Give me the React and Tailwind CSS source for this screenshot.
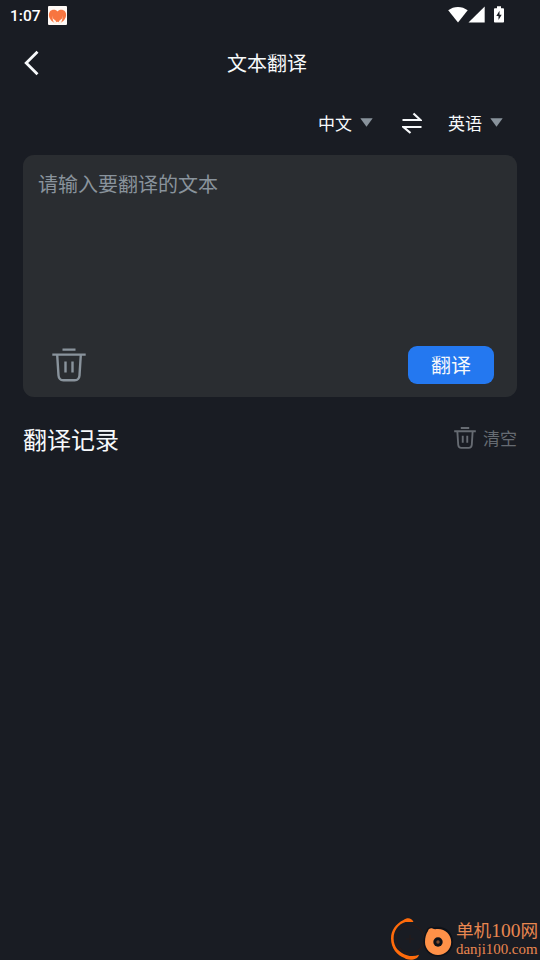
import { useState } from "react";

const TrashIcon = ({ className, strokeWidth }) => (
  <svg viewBox="0 0 34 34" className={className} fill="none" stroke="currentColor" strokeWidth={strokeWidth}>
    <path d="M10.500 1.600h13M0.300 6.600h33.400" />
    <path d="M5.200 7l1.300 20.500c.3 3.500 1.500 4.700 4.800 4.700h11.400c3.300 0 4.500-1.200 4.800-4.700L28.800 7" />
    <path d="M13.500 13.500v11M20.500 13.500v11" />
  </svg>
);

const StatusBar = () => (
  <div className="flex h-8 items-center justify-between pl-[10px] pr-[36px] text-white">
    <div className="flex items-center gap-[7px]">
      <span className="w-[31px] whitespace-nowrap font-[Roboto] text-[15.5px] font-medium leading-8">1:07</span>
      <svg viewBox="0 0 19 19" className="-mt-[1px] h-[19px] w-[19px]">
        <rect width="19" height="19" rx="1" fill="#fffaf7" />
        <path d="M9.500 5.500C8 3.300 3.800 3.100 1.700 5.700c-1.500 2.600-.9 5.500.8 7.800 1.200 1.800 2.500 2.800 4 3.200l3-1 3 1c1.500-.4 2.800-1.400 4-3.200 1.700-2.300 2.300-5.200.8-7.800-2.100-2.600-6.300-2.400-7.800-.2z" fill="#f77540" />
        <path d="M4 9.500l1 3 3 2.500.8 3H6.500L5 14.500zM15 9.500l-1 3-3 2.500-.8 3h2.300l1.500-3.500z" fill="#fff1e6" />
      </svg>
    </div>
    <div className="flex items-center">
      <svg viewBox="0 0 20 17" className="-mt-[3px] h-[17px] w-5" fill="#fff">
        <path d="M.2 4.300C5.800-.2 14-.2 19.700 4.300L10 16.500z" />
      </svg>
      <svg viewBox="0 0 17 17" className="-mt-[3px] h-[17px] w-[17px]" fill="#fff">
        <path d="M16.700 .5v16H.5z" />
      </svg>
      <svg viewBox="0 0 10 17" className="-mt-[3px] ml-[9px] h-[17px] w-[10px]">
        <path d="M3 .3h4v1.900h2.200q.8 0 .8.8v12.700q0 .8-.8.8H.8q-.8 0-.8-.8V3q0-.8.8-.8H3z" fill="#fff" />
        <path d="M5.500 4.700L2.300 10h2.200v4l3.200-5.300H5.500z" fill="#191c23" />
      </svg>
    </div>
  </div>
);

const Language = ({ name }) => (
  <button className="flex items-center gap-[8px] text-[17px] leading-6">
    <span>{name}</span>
    <svg viewBox="0 0 13 9" className="mb-[1px] h-[9px] w-[13px]" fill="#89939c">
      <path d="M.3 .3h12.400L6.500 8.800z" />
    </svg>
  </button>
);

const Watermark = () => (
  <div className="flex h-[43px] w-[150px] self-end">
    <svg viewBox="0 0 64 43" className="h-[43px] w-16 shrink-0">
      <circle cx="20" cy="22" r="14" fill="none" stroke="#241b1c" strokeWidth="1.500" />
      <path d="M16 22h8M20 18v8" stroke="#241b1c" strokeWidth="1.200" />
      <path d="M23.500 5C21.500.5 17 .3 13.500 3 5.500 7 1 13.500 1 21.500 1 31 7 38.500 14.500 41c3 2.500 13 3 14.500-3.200-4 1.400-8 1.700-12 .4C9 35.800 3.600 30 3.600 21.500 3.600 13.500 8.500 7 15.500 5z" fill="#ff6b0b" />
      <path d="M36.500 13.500c1-3 4-4.500 7.500-3.300C55 8 63 15 63 25c0 8-6.500 14.500-15 14.500S33.500 33 33.500 25c0-4.500 1-8.500 3-11.500z" fill="#0e1118" />
      <path d="M38 14c.5-2.200 2.800-3.500 5-2.200 2 .8 3.500.1 5 .2 7.500 0 13.200 5.800 13.200 13S55.200 38 48 38s-13-5.800-13-13c0-4.500 1-8 3-11z" fill="#ff9148" />
      <circle cx="48" cy="25" r="4.700" fill="#0e1118" />
      <circle cx="48" cy="25" r="1.700" fill="#7a4a2d" />
    </svg>
    <div className="ml-[2px] whitespace-nowrap font-['Liberation_Serif','Noto_Sans_CJK_SC',serif] text-[#e98750]">
      <p className="mt-[2px] h-[23px] text-[17.600px] leading-[23px]">
        单机<span className="text-[19.500px]">100</span>网
      </p>
      <p className="h-[18px] text-[14.900px] leading-[15px]">danji100.com</p>
    </div>
  </div>
);

export default function App() {
  const [text, setText] = useState("");

  return (
    <div className="flex h-[960px] w-[540px] flex-col overflow-hidden bg-[#191c23] font-['Noto_Sans_CJK_SC',sans-serif] text-[#f7f9fb]">
      <StatusBar />

      <header className="grid h-[62px] grid-cols-[60px_1fr_66px] items-center">
        <button className="pl-[24px]">
          <svg viewBox="0 0 16 26" className="h-[26px] w-4" fill="none" stroke="currentColor" strokeWidth="2.800">
            <path d="M13.500 1.700L2.200 13l11.300 11.300" />
          </svg>
        </button>
        <h1 className="text-center text-[20px] leading-7">文本翻译</h1>
      </header>

      <div className="flex h-[61px] items-center justify-end pb-[3px] pr-[37px]">
        <Language name="中文" />
        <button className="ml-[29px] mr-[26px]">
          <svg viewBox="0 0 20 22" className="h-[22px] w-5" fill="none" stroke="currentColor" strokeWidth="2.200">
            <path d="M.5 8h18L11.500 1.500M19.500 15h-18l7 6" />
          </svg>
        </button>
        <Language name="英语" />
      </div>

      <section className="mx-[23px] flex h-[242px] flex-col rounded-[11px] bg-[#2a2d31]">
        <textarea
          className="w-full flex-1 resize-none bg-transparent px-[15px] pt-[14px] text-[20px] leading-[30px] outline-none placeholder:text-[#89939c]"
          placeholder="请输入要翻译的文本"
          value={text}
          onChange={(e) => setText(e.target.value)}
        />
        <div className="flex h-[51px] items-start justify-between pl-[29px] pr-[23px]">
          <button className="pt-[2px] text-[#89939c]" onClick={() => setText("")}>
            <TrashIcon className="h-[34px] w-[34px]" strokeWidth={2.4} />
          </button>
          <button className="h-[38px] w-[86px] rounded-[9px] bg-[#2478f0] text-[20px] leading-[38px]">翻译</button>
        </div>
      </section>

      <div className="mx-[23px] mt-[22px] flex h-10 items-center justify-between">
        <h2 className="text-[24px] leading-10">翻译记录</h2>
        <button className="flex items-center gap-[7px] pb-[2px] text-[17px] leading-6 text-[#666b72]">
          <TrashIcon className="h-[22px] w-[22px]" strokeWidth={2.9} />
          清空
        </button>
      </div>

      <div className="flex-1" />
      <Watermark />
    </div>
  );
}
